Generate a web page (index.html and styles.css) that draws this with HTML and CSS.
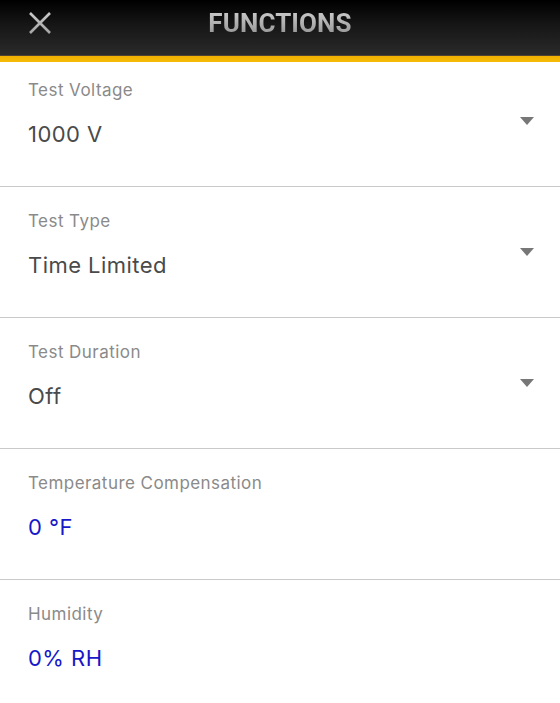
FILE: index.html
```html
<!DOCTYPE html>
<html lang="en">
<head>
<meta charset="utf-8">
<title>Functions</title>
<link rel="stylesheet" href="styles.css">
</head>
<body>
<header class="topbar">
  <span class="close" aria-label="Close">
    <svg width="24" height="24" viewBox="0 0 24 24">
      <defs>
        <linearGradient id="xg" x1="0" y1="0" x2="0" y2="1">
          <stop offset="0" stop-color="#c9c9c9"/>
          <stop offset="1" stop-color="#a5a5a5"/>
        </linearGradient>
      </defs>
      <path d="M2 2 L22 22 M22 2 L2 22" stroke="url(#xg)" stroke-width="2.6" stroke-linecap="butt" fill="none"/>
    </svg>
  </span>
  <h1 class="title">FUNCTIONS</h1>
  <span class="spacer"></span>
</header>
<div class="accent"></div>
<main class="list">
  <section class="field field--first">
    <div class="field-text">
      <div class="label">Test Voltage</div>
      <div class="value">1000 V</div>
    </div>
    <span class="caret"></span>
  </section>
  <section class="field">
    <div class="field-text">
      <div class="label">Test Type</div>
      <div class="value">Time Limited</div>
    </div>
    <span class="caret"></span>
  </section>
  <section class="field">
    <div class="field-text">
      <div class="label">Test Duration</div>
      <div class="value">Off</div>
    </div>
    <span class="caret"></span>
  </section>
  <section class="field">
    <div class="field-text">
      <div class="label">Temperature Compensation</div>
      <div class="value value--blue">0 °F</div>
    </div>
  </section>
  <section class="field field--last">
    <div class="field-text">
      <div class="label">Humidity</div>
      <div class="value value--blue">0% RH</div>
    </div>
  </section>
</main>
</body>
</html>
```

FILE: styles.css
```css
* { box-sizing: border-box; }

html, body {
  margin: 0;
  padding: 0;
  background: #ffffff;
}

body {
  font-family: Inter, "Liberation Sans", Arial, sans-serif;
  width: 560px;
  height: 703px;
  overflow: hidden;
}

.topbar {
  height: 56px;
  display: grid;
  grid-template-columns: 1fr auto 1fr;
  align-items: start;
  background: linear-gradient(to bottom, #000000 0%, #161616 45%, #2a2a2a 100%);
  border-bottom: 1px solid #4d4330;
}

.close {
  justify-self: start;
  margin-left: 28px;
  margin-top: 11px;
  width: 24px;
  height: 24px;
  display: block;
}

.close svg { display: block; }

.title {
  margin: 0;
  padding-top: 8px;
  font-family: Roboto, "Liberation Sans", Arial, sans-serif;
  font-weight: 700;
  font-size: 26px;
  line-height: 30px;
  letter-spacing: 0.1px;
  background: linear-gradient(to bottom, #e2e2e2 0%, #b5b5b5 55%, #8e8e8e 100%);
  -webkit-background-clip: text;
  background-clip: text;
  color: transparent;
}

.accent {
  height: 6px;
  background: linear-gradient(to bottom, #f0b000, #f6bb06);
}

.list {
  display: flex;
  flex-direction: column;
}

.field {
  height: 131px;
  display: flex;
  border-bottom: 1px solid #c9c9c9;
}

.field--first { height: 125px; }

.field--last { border-bottom: none; }

.field-text {
  flex: 1;
  padding-left: 28px;
  padding-top: 24px;
}

.field--first .field-text { padding-top: 18px; }

.label {
  font-size: 17px;
  line-height: 20px;
  letter-spacing: 0.45px;
  color: #8a8a8a;
}

.value {
  margin-top: 21px;
  font-size: 22px;
  line-height: 26px;
  letter-spacing: 0.45px;
  color: #4a4a4a;
}

.value--blue { color: #1818c8; }

.caret {
  align-self: center;
  width: 0;
  height: 0;
  margin-right: 26px;
  border-left: 7.5px solid transparent;
  border-right: 7.5px solid transparent;
  border-top: 8px solid #777777;
}

.field--first .caret { margin-bottom: 6px; }
```
